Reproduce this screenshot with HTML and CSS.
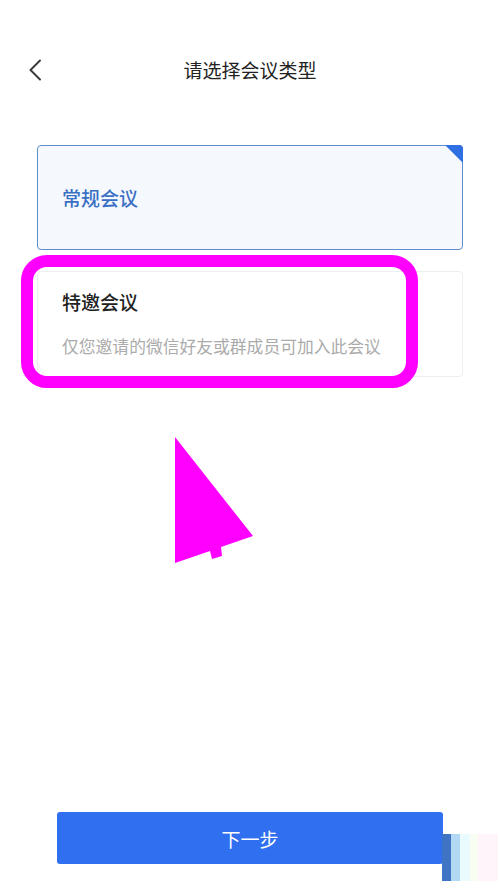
FILE: index.html
```html
<!DOCTYPE html>
<html lang="zh-CN">
<head>
<meta charset="utf-8">
<title>请选择会议类型</title>
<link rel="stylesheet" href="styles.css">
</head>
<body>
<div class="page">
  <header class="header">
    <div class="back">
      <svg width="14" height="22" viewBox="0 0 14 22"><path d="M12 1.5 L2.5 11 L12 20.5" fill="none" stroke="#3a3a3a" stroke-width="2" stroke-linecap="round" stroke-linejoin="round"/></svg>
    </div>
    <h1 class="title">请选择会议类型</h1>
    <div></div>
  </header>

  <div class="cards">
    <div class="card card-active">
      <span class="card-title">常规会议</span>
      <svg class="corner" width="18" height="18" viewBox="0 0 18 18"><path d="M0 0 H14 A4 4 0 0 1 18 4 V18 Z" fill="#2e6fe3"/></svg>
    </div>
    <div class="card card-plain">
      <span class="card-title dark">特邀会议</span>
      <span class="card-desc">仅您邀请的微信好友或群成员可加入此会议</span>
    </div>
  </div>

  <button class="next">下一步</button>
</div>

<div class="highlight"></div>
<svg class="pointer" width="500" height="889" viewBox="0 0 500 889">
  <polygon points="175,437 253,536 221,547 222,556 212,559 210,551 175,563" fill="#ff00ff"/>
</svg>
<div class="strips">
  <span class="s1"></span><span class="s2"></span><span class="s3"></span><span class="s4"></span><span class="s5"></span>
</div>
</body>
</html>
```
FILE: styles.css
```css
html, body {
  margin: 0;
  padding: 0;
  background: #ffffff;
}
body {
  font-family: "Noto Sans CJK SC", "Noto Sans", sans-serif;
  position: relative;
  width: 500px;
  height: 889px;
  overflow: hidden;
}
.page {
  display: flex;
  flex-direction: column;
  height: 889px;
  box-sizing: border-box;
  padding-bottom: 25px;
}
.header {
  display: grid;
  grid-template-columns: 1fr auto 1fr;
  align-items: center;
  height: 40px;
  margin-top: 50px;
  padding: 0 28px;
}
.back {
  display: flex;
  align-items: center;
}
.title {
  margin: 0;
  font-size: 19px;
  font-weight: 400;
  color: #222;
  line-height: 40px;
}
.cards {
  display: flex;
  flex-direction: column;
  gap: 21px;
  margin: 55px 37px 0;
}
.card {
  position: relative;
  box-sizing: border-box;
  border-radius: 4px;
  padding: 0 24px;
}
.card-active {
  height: 105px;
  border: 1px solid #5f8ccc;
  background: #f5f8fd;
  display: flex;
  align-items: center;
}
.corner {
  position: absolute;
  top: -1px;
  right: -1px;
}
.card-plain {
  height: 106px;
  border: 1px solid #eeeeee;
  display: flex;
  flex-direction: column;
  justify-content: center;
  gap: 22px;
}
.card-title {
  font-size: 19px;
  font-weight: 500;
  color: #3a70c4;
  line-height: 22px;
}
.card-title.dark {
  color: #222;
}
.card-desc {
  font-size: 16.8px;
  color: #ababab;
  line-height: 22px;
  white-space: nowrap;
}
.next {
  margin: auto 57px 0;
  height: 52px;
  border: none;
  border-radius: 3px;
  background: #2f6ff0;
  color: #fff;
  font-family: "Noto Sans CJK SC", "Noto Sans", sans-serif;
  font-size: 19px;
  font-weight: 400;
  padding: 0;
}
.highlight {
  position: absolute;
  left: 21px;
  top: 255px;
  width: 397px;
  height: 133px;
  box-sizing: border-box;
  border: 12px solid #ff00ff;
  border-radius: 26px;
}
.pointer {
  position: absolute;
  left: 0;
  top: 0;
  pointer-events: none;
}
.strips {
  position: absolute;
  left: 442px;
  top: 834px;
  height: 47px;
  display: flex;
}
.strips span {
  display: block;
  height: 100%;
}
.s1 { width: 9px; background: #3f74c4; }
.s2 { width: 9px; background: #b2d9f4; }
.s3 { width: 10px; background: #eafbff; }
.s4 { width: 8px; background: #f8fff2; }
.s5 { width: 20px; background: #fff4fa; }
```
